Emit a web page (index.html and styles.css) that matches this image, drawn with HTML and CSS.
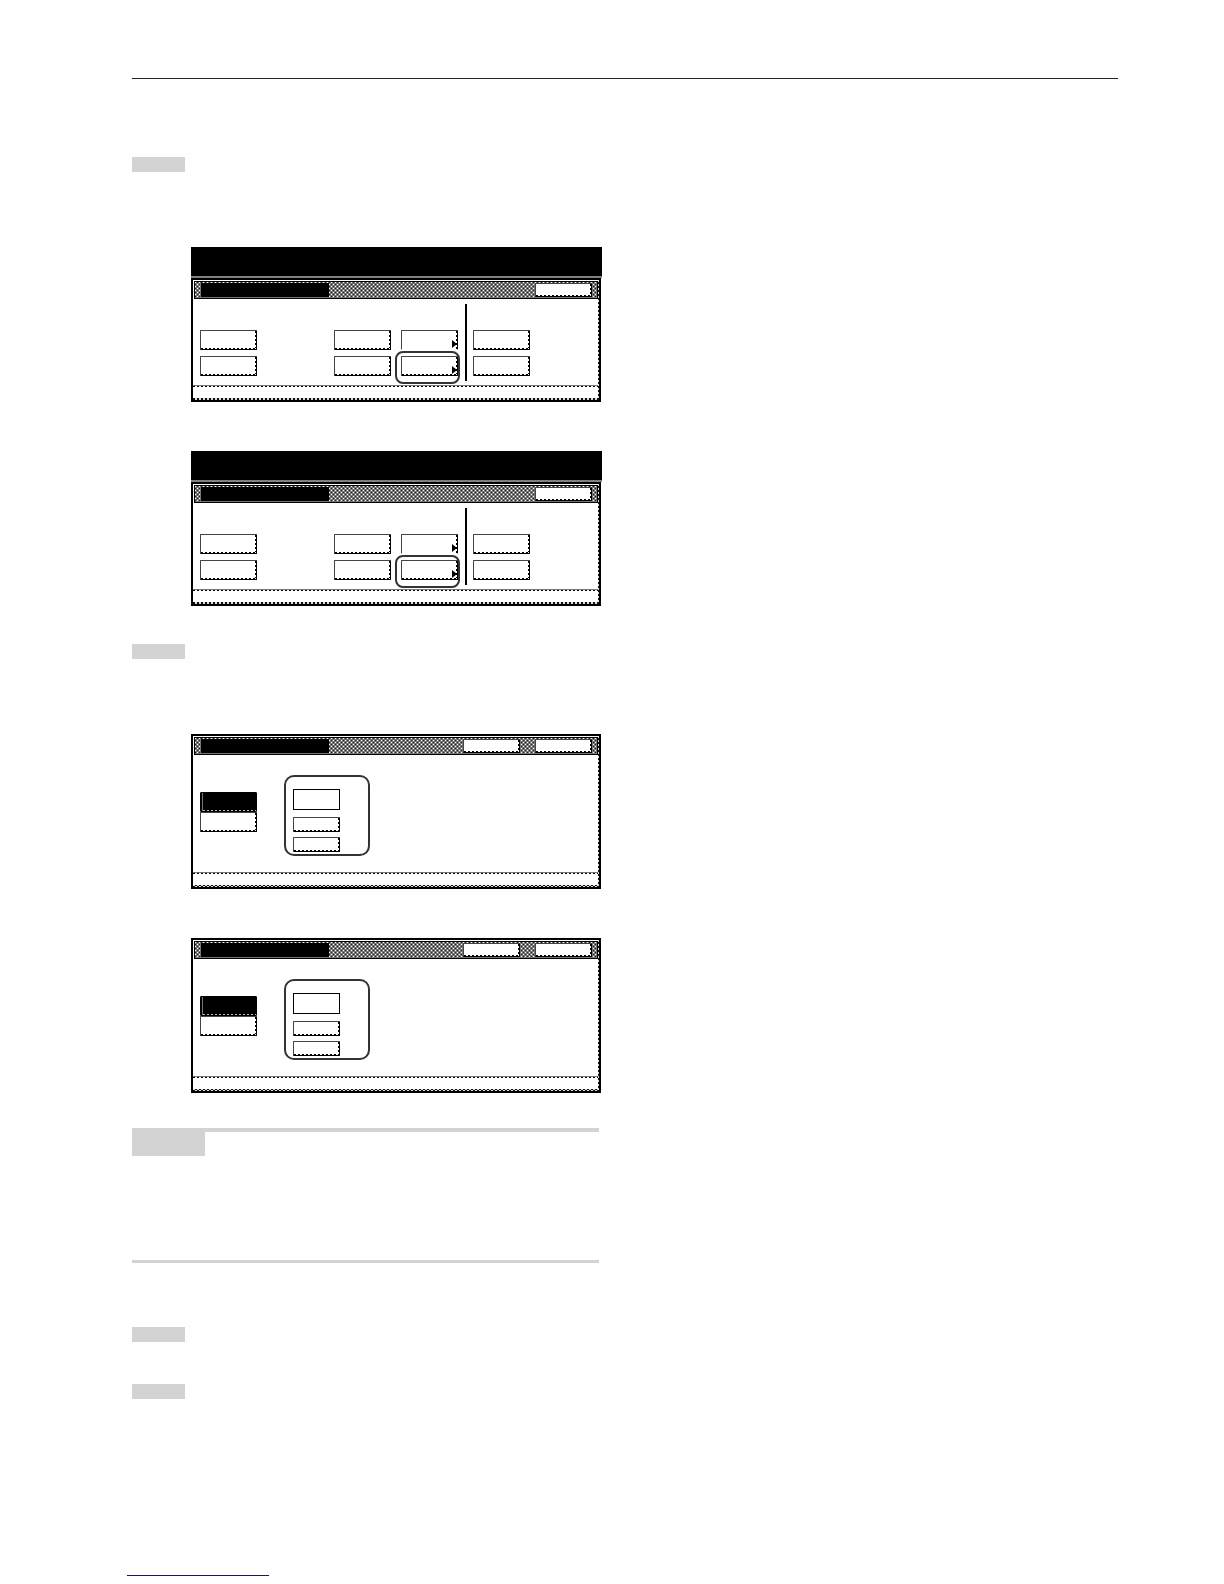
FILE: index.html
```html
<!DOCTYPE html>
<html lang="en">
<head>
<meta charset="utf-8">
<title>Touch panel settings</title>
<link rel="stylesheet" href="styles.css">
</head>
<body>
<div class="page">
  <header class="rule"></header>
  <main class="column">
    <section class="step step-first">
      <div class="tag"></div>
      <div class="panels">
        <div class="panel">
          <div class="message"></div>
          <div class="frame">
            <div class="screen">
              <div class="bar"><div class="title"></div><button class="action" aria-label="Close"></button></div>
              <div class="keys">
                <div class="stack stack-wide"><button class="key" aria-label="Key 1"></button><button class="key" aria-label="Key 2"></button></div>
                <div class="stack"><button class="key" aria-label="Key 3"></button><button class="key" aria-label="Key 4"></button></div>
                <div class="stack"><button class="key key-more key-open" aria-label="Key 5"></button><div class="marked"><button class="key key-more" aria-label="Key 6"></button></div></div>
                <div class="divider"></div>
                <div class="stack"><button class="key" aria-label="Key 7"></button><button class="key" aria-label="Key 8"></button></div>
              </div>
              <div class="status"></div>
            </div>
          </div>
        </div>
        <div class="panel">
          <div class="message"></div>
          <div class="frame">
            <div class="screen">
              <div class="bar"><div class="title"></div><button class="action" aria-label="Close"></button></div>
              <div class="keys">
                <div class="stack stack-wide"><button class="key" aria-label="Key 1"></button><button class="key" aria-label="Key 2"></button></div>
                <div class="stack"><button class="key" aria-label="Key 3"></button><button class="key" aria-label="Key 4"></button></div>
                <div class="stack"><button class="key key-more key-open" aria-label="Key 5"></button><div class="marked"><button class="key key-more" aria-label="Key 6"></button></div></div>
                <div class="divider"></div>
                <div class="stack"><button class="key" aria-label="Key 7"></button><button class="key" aria-label="Key 8"></button></div>
              </div>
              <div class="status"></div>
            </div>
          </div>
        </div>
      </div>
    </section>

    <section class="step step-second">
      <div class="tag"></div>
      <div class="panels">
        <div class="frame">
          <div class="screen">
            <div class="bar"><div class="title"></div><button class="action" aria-label="Back"></button><button class="action" aria-label="Close"></button></div>
            <div class="options">
              <div class="modes"><button class="key key-on" aria-label="Mode 1"></button><button class="key" aria-label="Mode 2"></button></div>
              <div class="values"><div class="value"></div><button class="key key-small" aria-label="Value up"></button><button class="key key-small" aria-label="Value down"></button></div>
            </div>
            <div class="status"></div>
          </div>
        </div>
        <div class="frame">
          <div class="screen">
            <div class="bar"><div class="title"></div><button class="action" aria-label="Back"></button><button class="action" aria-label="Close"></button></div>
            <div class="options">
              <div class="modes"><button class="key key-on" aria-label="Mode 1"></button><button class="key" aria-label="Mode 2"></button></div>
              <div class="values"><div class="value"></div><button class="key key-small" aria-label="Value up"></button><button class="key key-small" aria-label="Value down"></button></div>
            </div>
            <div class="status"></div>
          </div>
        </div>
      </div>
    </section>

    <aside class="note"><div class="note-label"></div></aside>

    <section class="closing">
      <div class="tag"></div>
      <div class="tag"></div>
    </section>
  </main>
  <footer class="foot"></footer>
</div>
</body>
</html>
```

FILE: styles.css
```css
* { box-sizing: border-box; }

body {
  margin: 0;
  background: #fff;
  font-family: "Liberation Sans", sans-serif;
}

.page { padding: 78px 106px 8px 132px; }
.rule { border-top: 1px solid #222; }
.column { max-width: 470px; }

.tag { width: 53px; height: 15px; background: #d3d3d3; }
.step-first { padding-top: 78px; }
.step-second { padding-top: 38px; }
.panels {
  display: flex;
  flex-direction: column;
  gap: 49px;
  margin-left: 59px;
  padding-top: 75px;
}

/* Device display */
.message { height: 31px; background: #000; border-bottom: 2px solid #808080; }
.frame {
  margin-right: 1px;
  padding: 0 1px 2px 0;
  border: 2px solid #000;
  background: repeating-conic-gradient(#111 0 25%, #ddd 0 50%) 0 0 / 4px 4px;
}
.screen { background: #fff; padding-top: 1px; }

.bar {
  display: flex;
  align-items: center;
  gap: 15px;
  height: 18px;
  margin-left: 1px;
  padding: 0 5px 0 6px;
  border: 1px solid #000;
  background-color: #777;
  background-image:
    conic-gradient(from 0deg at 1px 1px, transparent 75%, #fff 0),
    conic-gradient(from 0deg at 1px 1px, transparent 75%, #fff 0),
    conic-gradient(from 0deg at 1px 1px, transparent 75%, #222 0),
    conic-gradient(from 0deg at 1px 1px, transparent 75%, #222 0);
  background-size: 4px 4px;
  background-position: 0 0, 2px 2px, 2px 0, 0 2px;
}
.title { width: 128px; height: 14px; margin-right: auto; background: #000; }

button { appearance: none; margin: 0; padding: 0; border-radius: 0; }
.key,
.action {
  display: block;
  width: 57px;
  height: 20px;
  border: 1px solid #000;
  border-top-color: #444;
  border-left-color: #444;
  border-radius: 1px;
  background:
    linear-gradient(90deg, #000 50%, #fff 0) 0 100% / 4px 1px repeat-x,
    linear-gradient(#000 50%, #fff 0) 100% 0 / 1px 4px repeat-y,
    #fff;
}
.action { height: 14px; }

.keys { display: flex; height: 86px; padding: 5px 7px 4px; }
.stack { display: flex; flex-direction: column; gap: 6px; padding-top: 26px; margin-right: 10px; }
.stack-wide { margin-right: 77px; }
.divider { width: 2px; margin: 0 6px 0 -3px; background: #000; }

.key-more { position: relative; }
.key-more::after {
  content: "";
  position: absolute;
  right: 0;
  bottom: 1px;
  border: solid transparent;
  border-width: 4px 0 4px 5px;
  border-left-color: #000;
}
.key-open { border-bottom-color: #fff; background: linear-gradient(#000 50%, #fff 0) 100% 0 / 1px 4px repeat-y; }
.marked { position: relative; }
.marked::after {
  content: "";
  position: absolute;
  inset: -5px -2px -8px -6px;
  border: 2px solid #333;
  border-radius: 8px;
  pointer-events: none;
}

.status {
  height: 13px;
  border-top: 1px solid #777;
  background: linear-gradient(90deg, #000 50%, #fff 0) 0 0 / 4px 1px repeat-x;
}

.options { display: flex; height: 117px; padding: 20px 7px 16px; }
.modes { padding-top: 17px; margin-right: 27px; }
.key-on {
  border-color: #000;
  background:
    linear-gradient(#777, #777) 1px 0 / 1px 100% no-repeat,
    linear-gradient(90deg, #000 50%, #bbb 0) 0 100% / 4px 1px repeat-x,
    #000;
}
.values {
  display: flex;
  flex-direction: column;
  width: 86px;
  padding: 12px 7px 0;
  border: 2px solid #333;
  border-radius: 10px;
}
.value { width: 47px; height: 21px; margin-bottom: 2px; border: 1px solid #000; }
.key-small { width: 47px; height: 15px; margin-top: 5px; }

.note {
  max-width: 467px;
  height: 135px;
  margin-top: 35px;
  border-top: 4px solid #d3d3d3;
  border-bottom: 3px solid #d3d3d3;
}
.note-label { width: 73px; height: 24px; background: #d3d3d3; }

.closing { display: flex; flex-direction: column; gap: 42px; padding-top: 64px; }
.foot { width: 142px; margin: 176px 0 0 -5px; border-top: 1px solid #171769; }
```
